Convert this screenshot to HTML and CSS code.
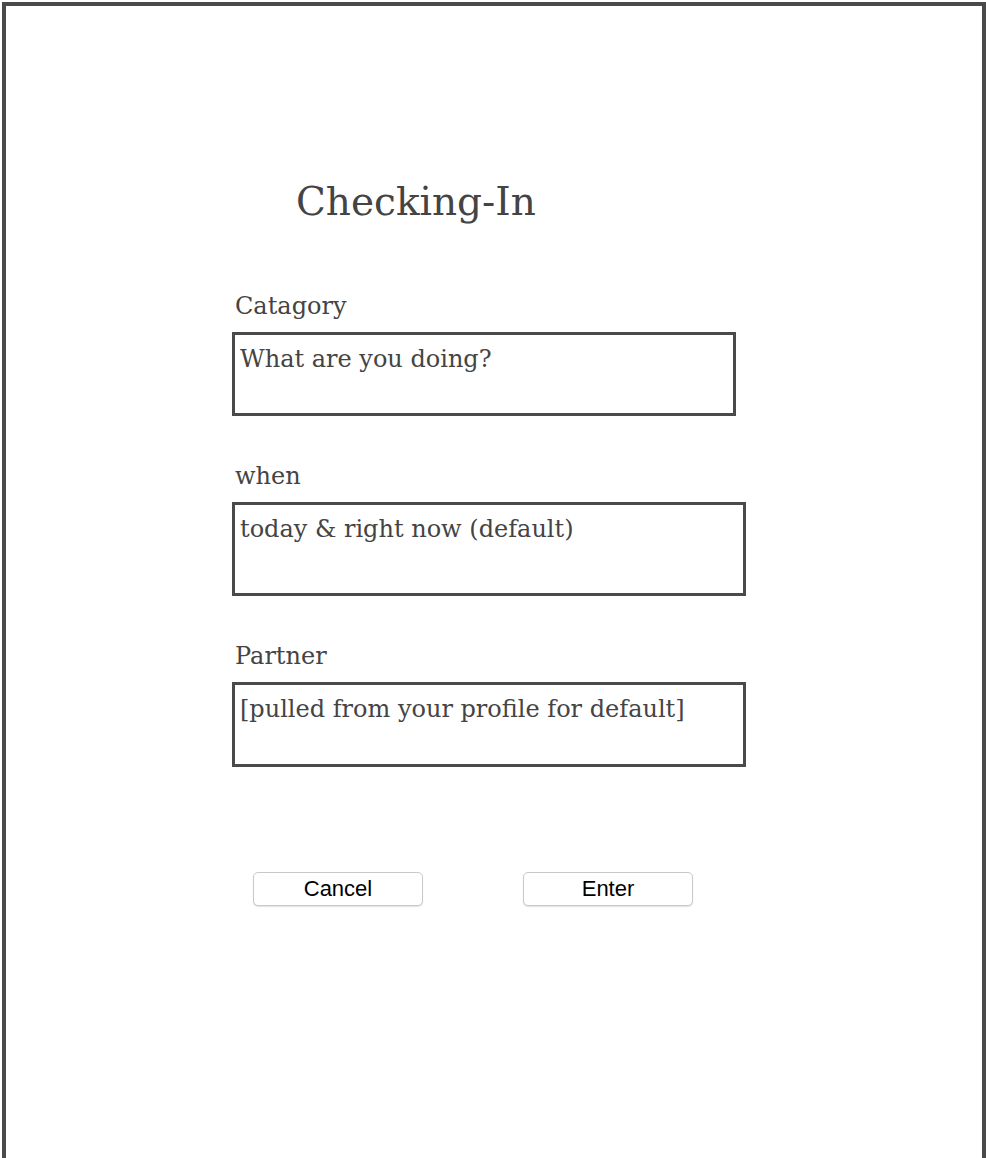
FILE: index.html
```html
<!DOCTYPE html>
<html lang="en">
<head>
<meta charset="utf-8">
<title>Checking-In</title>
<link rel="stylesheet" href="styles.css">
</head>
<body>
<div class="frame">
  <form class="form">
    <h1 class="title">Checking-In</h1>
    <div class="field">
      <label class="label">Catagory</label>
      <div class="box box-narrow">What are you doing?</div>
    </div>
    <div class="field">
      <label class="label">when</label>
      <div class="box box-tall">today &amp; right now (default)</div>
    </div>
    <div class="field">
      <label class="label">Partner</label>
      <div class="box">[pulled from your profile for default]</div>
    </div>
    <div class="actions">
      <button type="button" class="btn">Cancel</button>
      <button type="button" class="btn">Enter</button>
    </div>
  </form>
</div>
</body>
</html>
```
FILE: styles.css
```css
html, body {
  margin: 0;
  padding: 0;
  background: #ffffff;
}

.frame {
  box-sizing: border-box;
  margin: 2px 0 0 2px;
  width: 984px;
  height: 1200px;
  border: 4px solid #4a4a4a;
  border-bottom: none;
  padding-top: 172px;
  font-family: "DejaVu Serif", Georgia, serif;
  color: #444444;
}

.form {
  margin: 0 0 0 226px;
  display: flex;
  flex-direction: column;
}

.title {
  margin: 0 0 66px 64px;
  font-size: 39px;
  line-height: 48px;
  font-weight: normal;
}

.field {
  display: flex;
  flex-direction: column;
  margin-bottom: 46px;
}

.label {
  font-size: 24px;
  line-height: 28px;
  padding-left: 3px;
  margin-bottom: 12px;
}

.box {
  box-sizing: border-box;
  width: 514px;
  height: 85px;
  border: 3px solid #4a4a4a;
  padding: 10px 5px;
  font-size: 24px;
  line-height: 28px;
  white-space: nowrap;
}

.box-narrow {
  width: 504px;
  height: 84px;
}

.box-tall {
  height: 94px;
}

.actions {
  display: flex;
  gap: 100px;
  margin: 59px 0 0 21px;
}

.btn {
  box-sizing: border-box;
  width: 170px;
  height: 34px;
  background: #ffffff;
  border: 1px solid #c9c9c9;
  border-radius: 5px;
  box-shadow: 0 1px 1px rgba(0, 0, 0, 0.12);
  font-family: "Liberation Sans", Arial, sans-serif;
  font-size: 22px;
  color: #000000;
  padding: 0;
}
```
